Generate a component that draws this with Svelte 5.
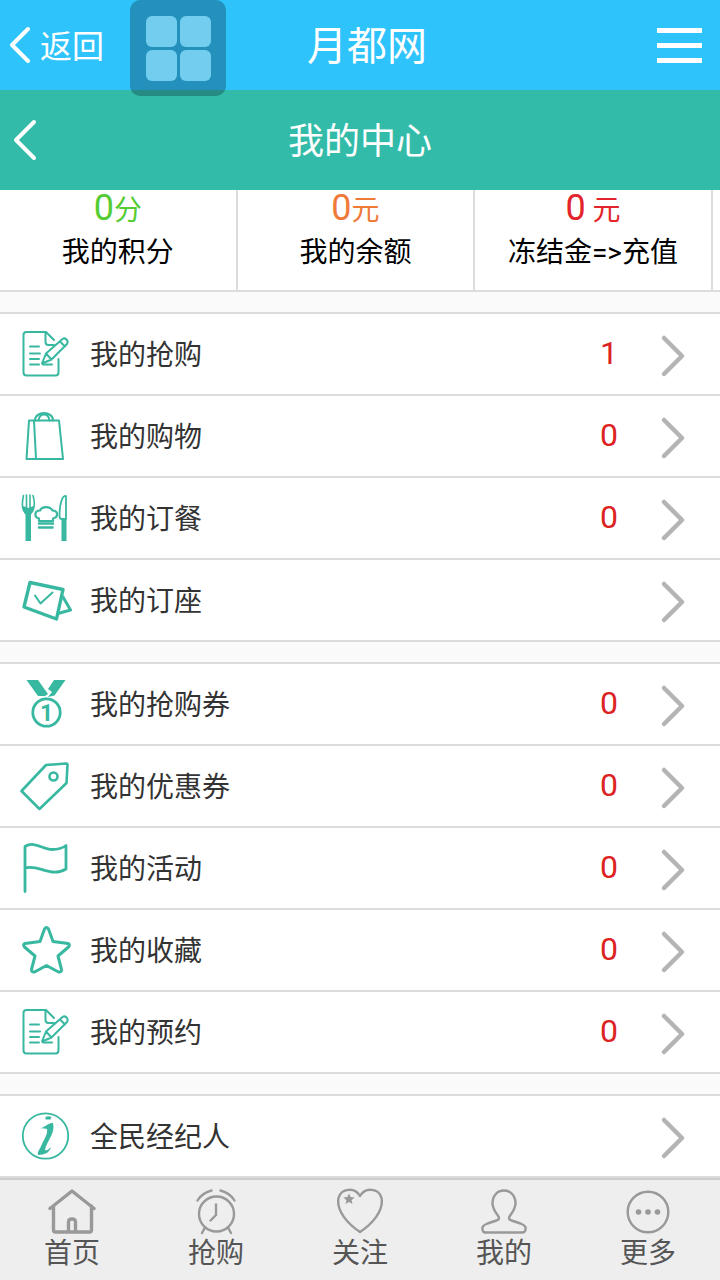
<script lang="ts">
  type Item = { icon: string; label: string; count?: number };

  const stats = [
    { value: '0', unit: '分', label: '我的积分', tone: 'green' },
    { value: '0', unit: '元', label: '我的余额', tone: 'orange' },
    { value: '0', unit: ' 元', label: '冻结金=>充值', tone: 'red' }
  ];

  const groups: Item[][] = [
    [
      { icon: 'note', label: '我的抢购', count: 1 },
      { icon: 'bag', label: '我的购物', count: 0 },
      { icon: 'dining', label: '我的订餐', count: 0 },
      { icon: 'seat', label: '我的订座' }
    ],
    [
      { icon: 'medal', label: '我的抢购券', count: 0 },
      { icon: 'tag', label: '我的优惠券', count: 0 },
      { icon: 'flag', label: '我的活动', count: 0 },
      { icon: 'star', label: '我的收藏', count: 0 },
      { icon: 'note', label: '我的预约', count: 0 }
    ],
    [{ icon: 'info', label: '全民经纪人' }]
  ];

  const tabs = [
    { icon: 'home', label: '首页' },
    { icon: 'clock', label: '抢购' },
    { icon: 'heart', label: '关注' },
    { icon: 'user', label: '我的' },
    { icon: 'more', label: '更多' }
  ];
</script>

<div class="page">
  <header class="site-bar">
    <a class="back" href="#back">
      <svg width="22" height="38" viewBox="0 0 22 38"><path d="M20 3 4 19l16 16" /></svg>
      <span>返回</span>
    </a>
    <h1>月都网</h1>
    <button class="menu" aria-label="菜单">
      <span></span>
      <span></span>
      <span></span>
    </button>
  </header>

  <button class="float-tile" aria-label="应用">
    <span></span>
    <span></span>
    <span></span>
    <span></span>
  </button>

  <div class="title-bar">
    <a class="back" href="#prev" aria-label="返回">
      <svg width="26" height="42" viewBox="0 0 26 42"><path d="M22 3 4 21l18 18" /></svg>
    </a>
    <h2>我的中心</h2>
  </div>

  <main>
    <section class="stats">
      {#each stats as stat}
        <a class="stat" href="#stat">
          <span class="value {stat.tone}">{stat.value}<small>{stat.unit}</small></span>
          <span class="name">{stat.label}</span>
        </a>
      {/each}
    </section>

    {#each groups as group}
      <ul class="group">
        {#each group as item}
          <li>
            <a class="row" href="#item">
              <svg class="icon" viewBox="0 0 52 52">
                {#if item.icon === 'note'}
                  <g stroke-width="2">
                    <path d="M38.5 31v13.5a3 3 0 0 1-3 3h-29a3 3 0 0 1-3-3V7a3 3 0 0 1 3-3h19.500l8 8M25.500 4v10a3 3 0 0 0 3 3H34" />
                    <path d="M10 18.500h9M10 25.500h10M10 31h9M10 36.500h9M23 36.500h9" />
                    <path d="m22 35.500 4-10L42.500 11q2-1.500 4 .5t.5 4.500L31.500 31.500zM26 25.500l5.500 6M40 13.500l5 5" />
                  </g>
                {:else if item.icon === 'bag'}
                  <g stroke-width="2">
                    <path d="M9 10.500h30L43 49H6.500zM14 10.500 16 49" />
                    <path d="M15 10.500c0-10 18-10 18 0M18.500 10.500c1-8 10-8 11 0" />
                  </g>
                {:else if item.icon === 'dining'}
                  <path stroke-width="1.600" d="M3.500 3.500C2 10 1 20 8.200 22.500 15.500 20 15 10 13 3.500M6.500 3v13M10 3v13M3.500 15q4.500 3 9.500 0" />
                  <path class="solid" d="M3 15q5 3 10.500 0-1 6-2.500 7.500V49H5.500V22.500Q3.500 21 3 15zM41.500 27h5v22h-5z" />
                  <path stroke-width="1.800" d="M46 27V4c-4-1-6.500 9-6.500 20 0 2 1 3 2.500 3z" />
                  <path stroke-width="2.200" d="M19 29v-2.500c-5-1-5-8 1-8 2-4.500 10-4.500 12.500 0 6 0 6 7 .5 8V29z" />
                  <path stroke-width="2.600" d="M19 31.500h14M19 35.500h13.500" />
                {:else if item.icon === 'seat'}
                  <path stroke-width="3.400" d="m10 8.500 33 7L36.500 45 4 33z" />
                  <path stroke-width="3" d="m43 23 7.500 13L38 39.500" />
                  <path stroke-width="2" d="m15 21.500 5.500 8 12-11" />
                {:else if item.icon === 'medal'}
                  <path class="solid" d="M6.500 2h11.500l10 14-3 2h-7zM34 2h11.500L34.500 17.500 28 19l4-5-4-3z" />
                  <circle cx="26.500" cy="34.500" r="13.700" stroke-width="2.800" />
                  <text x="26.500" y="42.500" font-size="23">1</text>
                {:else if item.icon === 'tag'}
                  <path stroke-width="2.600" d="m26 5 20.500-1.500q1 0 1 1L46.500 23l-27 26L1.500 31z" />
                  <circle cx="33.500" cy="16.500" r="4" stroke-width="2.600" />
                {:else if item.icon === 'flag'}
                  <path stroke-width="2.800" d="M5 49.500V4.500c9-6 18 3 27 3 5 0 10-1 14-4V27c-4 2.500-9 3.500-14 3-9-1-18-7-27-4" />
                {:else if item.icon === 'star'}
                  <path stroke-width="3" d="M24.500 5q2-3 4 0L33 17.500l15 2q2.500 1 .5 3.500l-10.500 9 3.500 13.500q0 3-3 2.500l-12-6.500L14.500 48q-3 .5-3-2.500L15 32 4.500 23q-2-2.500.5-3.500l15-2z" />
                {:else if item.icon === 'info'}
                  <circle cx="25.500" cy="26" r="22.700" stroke-width="1.800" />
                  <path class="solid" d="M25.500 7q3-1.500 6 0l-1 2.500h-5z" />
                  <path class="solid" d="M20 18.500c5-1 8-6 13-5.500 1.500 6-1 12-4 17-2 4-4 8-4 10 2 1 4-1 6-3-1 5-6 8-13 8-1-3 2-6 4-11 3-6 6-11 5-15q-4-1-7-.5z" />
                {/if}
              </svg>
              <span class="label">{item.label}</span>
              <span class="count">{item.count ?? ''}</span>
              <svg class="arrow" viewBox="0 0 28 44"><path d="m4 4 18 18L4 40" /></svg>
            </a>
          </li>
        {/each}
      </ul>
    {/each}
  </main>

  <nav class="tabs">
    {#each tabs as tab}
      <a href="#tab">
        <svg viewBox="0 0 48 48">
          {#if tab.icon === 'home'}
            <path stroke-width="3.400" d="M2 20.500 24 3l22 17.500M5.500 18v24q0 2 2 2h34q2 0 2-2V18M20.500 43V34q0-3 3.500-3t3.500 3v9" />
          {:else if tab.icon === 'clock'}
            <circle cx="24.500" cy="26" r="17.500" />
            <path d="M24 16.500V27l-5.500 5.500M5.500 12.500Q10 5 19.500 2.500M28.500 2.500Q38 5 42.500 12.500M13 39.500 10 45M36 39.500l3 5.500" />
          {:else if tab.icon === 'heart'}
            <path d="M24 8C19-1 5 0 2.500 10 0 23 12 36 24 44 36 36 48 23 45.500 10 43 0 29-1 24 8z" />
            <path class="fill" d="m13 5.500 1.600 3.600 4 .4-3 2.700.9 3.900-3.500-2-3.500 2 .9-3.900-3-2.700 4-.4z" />
          {:else if tab.icon === 'user'}
            <path d="M24 2.500c-7 0-11.500 5.500-11.500 13 0 5 3 9 6 13 1 2 .5 3-2 4l-9 3c-5 2-6 4-4.500 7.500q.5 1.500 3 1.500h36q2.500 0 3-1.500c1.500-3.500.5-5.500-4.500-7.500l-9-3c-2.500-1-3-2-2-4 3-4 6-8 6-13 0-7.500-4.500-13-11.500-13z" />
          {:else}
            <circle cx="24" cy="24" r="20.300" />
            <g class="fill">
              <circle cx="14.500" cy="24" r="2.800" />
              <circle cx="24" cy="24" r="2.800" />
              <circle cx="33.500" cy="24" r="2.800" />
            </g>
          {/if}
        </svg>
        <span>{tab.label}</span>
      </a>
    {/each}
  </nav>
</div>

<style>
  :global(body) {
    background: #fafafa;
    font-family: Roboto, 'Noto Sans CJK SC', sans-serif;
  }

  .page {
    position: relative;
    min-height: 100vh;
    display: flex;
    flex-direction: column;
    font-size: 28px;
    line-height: 32px;
  }

  a {
    color: inherit;
    text-decoration: none;
  }

  button {
    border: none;
    padding: 0;
    cursor: pointer;
  }

  svg {
    display: block;
    fill: none;
    stroke-linecap: round;
    stroke-linejoin: round;
  }

  h1,
  h2 {
    margin: 0;
    font-weight: 400;
    text-align: center;
  }

  .site-bar,
  .title-bar {
    display: grid;
    grid-template-columns: 1fr auto 1fr;
    align-items: center;
    color: #fff;
  }

  .site-bar {
    height: 90px;
    padding: 0 18px 0 8px;
    background: #2ec3fb;
  }

  .title-bar {
    height: 100px;
    padding: 0 12px;
    background: #33bba9;
  }

  .site-bar h1 {
    padding: 4px 0 0 24px;
    font-size: 40px;
    line-height: 48px;
  }

  .title-bar h2 {
    padding-top: 4px;
    font-size: 36px;
    line-height: 44px;
  }

  .back {
    display: flex;
    align-items: center;
    gap: 10px;
    font-size: 32px;
    line-height: 40px;
  }

  .back span {
    padding-top: 4px;
  }

  .back svg {
    stroke: #fff;
    stroke-width: 4;
  }

  .menu {
    justify-self: end;
    width: 45px;
    display: flex;
    flex-direction: column;
    gap: 10px;
    background: none;
  }

  .menu span {
    height: 5px;
    background: #fff;
  }

  /* floats over both bars */
  .float-tile {
    position: absolute;
    top: 0;
    left: 130px;
    width: 96px;
    height: 96px;
    padding: 16px 15px 15px 16px;
    box-sizing: border-box;
    display: grid;
    grid-template-columns: 1fr 1fr;
    gap: 3px;
    border-radius: 10px;
    background: rgba(10, 30, 40, 0.3);
  }

  .float-tile span {
    border-radius: 6px;
    background: #72cdef;
  }

  main {
    flex: 1;
    display: flex;
    flex-direction: column;
    gap: 20px;
  }

  .stats {
    display: flex;
    height: 100px;
    border-bottom: 2px solid #dcdcdc;
    background: #fff;
  }

  .stat {
    width: 33%;
    display: flex;
    flex-direction: column;
    align-items: center;
    border-right: 2px solid #dcdcdc;
    box-sizing: border-box;
    color: #000;
  }

  .value {
    font-size: 36px;
    line-height: 36px;
    white-space: pre;
  }

  .value small {
    font-size: 28px;
  }

  .name {
    margin-top: 8px;
  }

  .green {
    color: #55cc33;
  }

  .orange {
    color: #ef7a3a;
  }

  .red {
    color: #e3242b;
  }

  .group {
    margin: 0;
    padding: 0;
    list-style: none;
    border-top: 2px solid #dcdcdc;
    background: #fff;
  }

  .row {
    display: flex;
    align-items: center;
    height: 80px;
    padding: 0 32px 0 20px;
    border-bottom: 2px solid #dcdcdc;
    color: #333;
  }

  .icon {
    width: 52px;
    height: 52px;
    margin-right: 18px;
    stroke: #38b8a0;
  }

  .icon .solid {
    fill: #38b8a0;
    stroke: none;
  }

  .icon text {
    fill: #38b8a0;
    stroke: none;
    font-weight: 700;
    text-anchor: middle;
  }

  .label {
    flex: 1;
    padding-top: 4px;
  }

  .count {
    width: 60px;
    margin-right: 21px;
    padding-bottom: 2px;
    color: #dd2222;
    font-size: 32px;
    text-align: center;
  }

  .arrow {
    width: 28px;
    height: 44px;
    margin-top: 4px;
    stroke: #b4b4b4;
    stroke-width: 4.5;
  }

  .tabs {
    position: sticky;
    bottom: 0;
    display: flex;
    height: 100px;
    border-top: 2px solid #cccccc;
    background: #eeeeee;
    color: #555;
  }

  .tabs a {
    flex: 1;
    display: flex;
    flex-direction: column;
    align-items: center;
    padding-top: 8px;
  }

  .tabs span {
    padding-top: 2px;
  }

  .tabs svg {
    width: 48px;
    height: 48px;
    stroke: #999;
    stroke-width: 2.4;
  }

  .tabs .fill {
    fill: #999;
    stroke: none;
  }
</style>
